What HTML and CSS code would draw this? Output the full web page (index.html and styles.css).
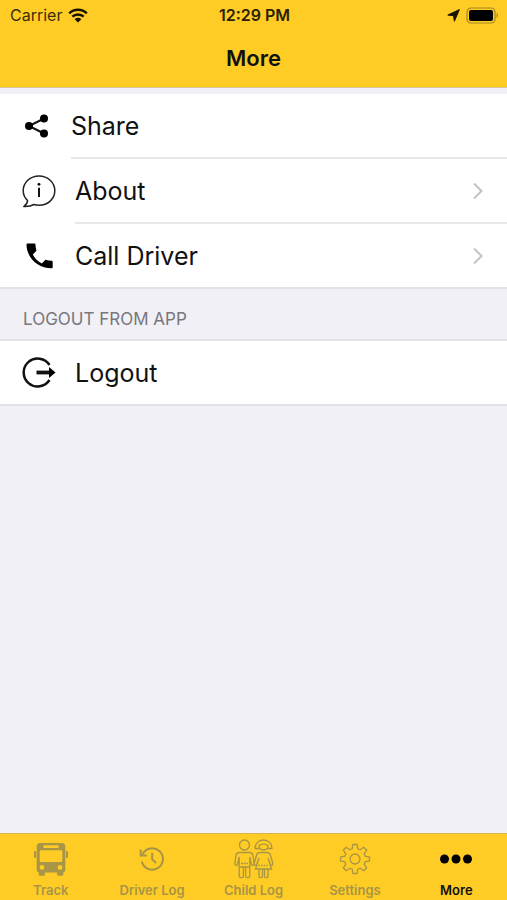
FILE: index.html
```html
<!DOCTYPE html>
<html lang="en">
<head>
  <meta charset="UTF-8">
  <meta name="viewport" content="width=device-width, initial-scale=1">
  <title>More</title>
  <link rel="stylesheet" href="styles.css">
</head>
<body>

  <header class="top-bar">
    <div class="status-bar">
      <div class="status-left">
        <span>Carrier</span>
        <svg width="20" height="15" viewBox="0 0 20 15">
          <path d="M1.2 5.4a12.6 12.6 0 0 1 17.6 0M4.3 8.7a8.2 8.2 0 0 1 11.4 0" fill="none" stroke="#1a1400" stroke-width="2.5"/>
          <path d="M6.6 11.2a4.9 4.9 0 0 1 6.8 0L10 14.6z" fill="#1a1400"/>
        </svg>
      </div>
      <span class="status-time">12:29 PM</span>
      <div class="status-right">
        <svg width="13" height="13" viewBox="0 0 13 13">
          <path d="M12.4.6 7.4 12.2 6.5 6.7.8 6z" fill="#1a1400" stroke="#1a1400" stroke-linejoin="round"/>
        </svg>
        <svg width="33" height="17" viewBox="0 0 33 17">
          <rect x="1" y="1" width="28" height="15" rx="4" fill="none" stroke="#a08325" stroke-width="1.2"/>
          <rect x="3" y="3" width="24" height="11" rx="2" fill="#000"/>
          <path d="M30.6 6v5c1.8-.8 1.8-4.2 0-5z" fill="#a08325"/>
        </svg>
      </div>
    </div>
    <h1>More</h1>
  </header>

  <main>
    <ul class="menu">
      <li>
        <a href="#share" class="menu-item menu-item-narrow">
          <span class="menu-icon">
            <svg width="26" height="26" viewBox="0 0 26 26">
              <path d="M20 5.5 5 13l15 7.5" fill="none" stroke="#111" stroke-width="2"/>
              <circle cx="5" cy="13" r="4"/>
              <circle cx="20" cy="5.5" r="4"/>
              <circle cx="20" cy="20.5" r="4"/>
            </svg>
          </span>
          <span class="menu-label">Share</span>
        </a>
      </li>
      <li>
        <a href="#about" class="menu-item">
          <span class="menu-icon">
            <svg width="34" height="34" viewBox="0 0 34 34">
              <path d="M5.6 26.5C2.8 24 1.2 20.6 1.2 16.8 1.2 8.6 8.2 2 17 2s15.800 6.600 15.800 14.800S25.800 31.300 17 31.300c-2 0-3.600-.3-5.200-.8-2.600 1.700-6 2.200-10 2 2.200-1.500 3.600-3.600 3.800-6z" fill="none" stroke="#222" stroke-width="1.5" stroke-linejoin="round"/>
              <path d="M17 13.700V23" stroke="#111" stroke-width="2"/>
              <circle cx="17" cy="10.300" r="1.400"/>
            </svg>
          </span>
          <span class="menu-label">About</span>
          <svg class="chevron" width="12" height="18" viewBox="0 0 12 18">
            <path d="m2 1.500 7.500 7.500L2 16.500"/>
          </svg>
        </a>
      </li>
      <li>
        <a href="#call" class="menu-item">
          <span class="menu-icon">
            <svg width="34" height="34" viewBox="0 0 34 34">
              <path d="M5.700 4.500h6.500c.8 0 1.300.5 1.300 1.300 0 1.800.3 3.500.8 5 .2.500 0 1-.3 1.400l-3.200 3.200c2 4 5 7 9 9l3.200-3.200c.4-.4.900-.5 1.400-.3 1.500.5 3.200.8 5 .8.800 0 1.300.5 1.300 1.300v5c0 .8-.5 1.300-1.300 1.300C15.600 29.300 4.500 18.200 4.500 5.800c0-.8.500-1.300 1.200-1.300z"/>
            </svg>
          </span>
          <span class="menu-label">Call Driver</span>
          <svg class="chevron" width="12" height="18" viewBox="0 0 12 18">
            <path d="m2 1.500 7.500 7.500L2 16.500"/>
          </svg>
        </a>
      </li>
    </ul>

    <h2>LOGOUT FROM APP</h2>

    <ul class="menu">
      <li>
        <button type="button" class="menu-item">
          <span class="menu-icon">
            <svg width="34" height="34" viewBox="0 0 34 34">
              <path d="M27.500 9a14 14 0 1 0 0 15" fill="none" stroke="#111" stroke-width="2.500"/>
              <path d="M14.500 16.500h13" stroke="#111" stroke-width="3.800"/>
              <path d="m27 11 6.500 5.500L27 22z"/>
            </svg>
          </span>
          <span class="menu-label">Logout</span>
        </button>
      </li>
    </ul>
  </main>

  <nav class="tab-bar">
    <a href="#track">
      <svg width="36" height="36" viewBox="0 0 36 36">
        <path fill="#a89545" fill-rule="evenodd" d="M7 2h22c2 0 3.300 1.300 3.300 3.300V29c0 1.300-.8 2.200-2 2.400v1.800c0 .9-.7 1.600-1.600 1.600h-3c-.9 0-1.600-.7-1.600-1.600v-1.700H11.900v1.700c0 .9-.7 1.600-1.600 1.600h-3c-.9 0-1.600-.7-1.600-1.600v-1.800c-1.200-.2-2-1.100-2-2.400V5.300C3.700 3.300 5 2 7 2zM11 4.300c-1 0-1 2.600 0 2.600h14c1 0 1-2.600 0-2.600zM8 9.300c-.8 0-1.300.5-1.300 1.300v9c0 .8.500 1.300 1.300 1.300h20c.8 0 1.300-.5 1.300-1.300v-9c0-.8-.5-1.300-1.300-1.300zM9 24a2.400 2.400 0 1 0 0 4.800A2.400 2.400 0 0 0 9 24zm18 0a2.400 2.400 0 1 0 0 4.800 2.400 2.400 0 0 0 0-4.800z"/>
        <path fill="#a89545" d="M3 10H2.200c-.7 0-1.200.5-1.200 1.200v4.600c0 .7.500 1.200 1.200 1.200H3zM33 10h.8c.7 0 1.200.5 1.200 1.200v4.600c0 .7-.5 1.200-1.200 1.200H33z"/>
      </svg>
      <span>Track</span>
    </a>
    <a href="#driver-log">
      <svg width="26" height="26" viewBox="0 0 26 26" class="line-icon line-bold">
        <path d="M3.500 8.500A10.700 10.700 0 1 1 2.800 15.500M13.200 6.800v6.500l4 3.600"/>
        <path d="M1.700 3.500v6h6"/>
      </svg>
      <span>Driver Log</span>
    </a>
    <a href="#child-log">
      <svg width="40" height="40" viewBox="0 0 40 40" class="line-icon">
        <!-- boy -->
        <circle cx="10.500" cy="6" r="5"/>
        <path d="M5.500 13.500h10c2.200 0 3.300 1.200 3.600 3.500l1 8c0 1.700-2.200 2-2.600.3L15.800 18v10H5.200V18l-1.700 7.300C3.100 27 .9 26.700.9 25l1-8c.3-2.300 1.400-3.500 3.600-3.500zM5.200 28v9.500c0 1.500 4.200 1.500 4.200 0V28M11.600 28v9.500c0 1.500 4.200 1.500 4.200 0V28"/>
        <path d="M7 24.500h7" stroke-dasharray="2 .6"/>
        <!-- girl -->
        <path d="M25 6.500c0 6 9 6 9 0M21 9.500c0-5 3.500-8.500 8.500-8.500S38 4.500 38 9.500h-4.500M21 9.500h4.500M25 6.500c1.800-1.800 7.200-1.800 9 0"/>
        <path d="M26 13.500h7c2 0 3.200 1 3.600 3l2.200 8c.4 1.700-1.800 2.300-2.500.7L34 19l3.500 11h-16L25 19l-2.300 6.200c-.7 1.600-2.900 1-2.500-.7l2.200-8c.4-2 1.600-3 3.600-3zM25 30v7.500c0 1.500 3.500 1.500 3.500 0V30M30.500 30v7.500c0 1.500 3.500 1.500 3.500 0V30"/>
        <path d="M24.500 26.500h10" stroke-dasharray="1.400 1.200"/>
      </svg>
      <span>Child Log</span>
    </a>
    <a href="#settings">
      <svg width="32" height="32" viewBox="-16 -16 32 32" class="line-icon">
        <path d="M-2.900-10.100-2-14.500H2l.9 4.400Q4-9.800 5.100-9.200L8.800-11.700l2.900 2.900L9.200-5.100Q9.800-4 10.100-2.900L14.500-2V2l-4.400.9Q9.800 4 9.200 5.100L11.700 8.800 8.800 11.700 5.100 9.200Q4 9.800 2.900 10.100L2 14.500H-2L-2.900 10.100Q-4 9.800-5.100 9.200L-8.800 11.700-11.700 8.800-9.200 5.100Q-9.800 4-10.100 2.900L-14.500 2V-2L-10.100-2.900Q-9.800-4-9.200-5.100L-11.700-8.800-8.800-11.700-5.100-9.200Q-4-9.800-2.900-10.100z"/>
        <circle r="5"/>
      </svg>
      <span>Settings</span>
    </a>
    <a href="#more" class="active" aria-current="page">
      <svg width="34" height="12" viewBox="0 0 34 12">
        <circle cx="5.500" cy="6" r="4.500"/>
        <circle cx="17" cy="6" r="4.500"/>
        <circle cx="28.500" cy="6" r="4.500"/>
      </svg>
      <span>More</span>
    </a>
  </nav>

</body>
</html>
```
FILE: styles.css
```css
* {
  box-sizing: border-box;
}

body {
  font-family: Inter, "Liberation Sans", sans-serif;
  background-color: #f1f0f6;
  color: #111;
  margin: 0;
  min-height: 100vh;
  display: flex;
  flex-direction: column;
}

svg {
  display: block;
  flex-shrink: 0;
}

.top-bar {
  background-color: #ffcc25;
  border-bottom: 1px solid #d5c693;
}

.status-bar {
  display: grid;
  grid-template-columns: 1fr auto 1fr;
  align-items: center;
  height: 28px;
  padding: 2px 8px 0 10px;
  font-size: 16px;
  color: #3a2e08;
}

.status-left, .status-right {
  display: flex;
  align-items: center;
  gap: 6px;
}

.status-right {
  justify-content: flex-end;
}

.status-time {
  font-weight: 600;
  color: #2a2105;
}

h1 {
  margin: 0;
  padding: 15px 0 14px;
  font-size: 22px;
  line-height: 30px;
  font-weight: 600;
  text-align: center;
}

main {
  flex: 1;
  padding-top: 6px;
}

.menu {
  list-style: none;
  margin: 0;
  padding: 0;
  background-color: white;
  box-shadow: inset 0 -2px 0 #e2e2e5;
}

.menu-item {
  display: flex;
  align-items: center;
  position: relative;
  width: 100%;
  height: 65px;
  padding: 0 23px 1px 22px;
  border: none;
  background: none;
  font: inherit;
  font-size: 25px;
  text-align: left;
  color: #111;
  text-decoration: none;
}

.menu-icon {
  display: flex;
  justify-content: center;
  width: 34px;
  margin-right: 19px;
}

.menu-item-narrow .menu-icon {
  width: 30px;
}

.menu-label {
  flex: 1;
}

/* separator starts under the label */
.menu li + li .menu-item::before {
  content: "";
  position: absolute;
  top: -2px;
  left: 75px;
  right: 0;
  height: 2px;
  background-color: #e8e8ea;
}

.menu li:nth-child(2) .menu-item::before {
  left: 71px;
}

.chevron path {
  fill: none;
  stroke: #c2c2c4;
  stroke-width: 2;
}

h2 {
  margin: 0;
  padding: 20px 23px 10px;
  border-bottom: 2px solid #e2e2e5;
  font-size: 17px;
  line-height: 20px;
  font-weight: 400;
  color: #77777c;
}

.tab-bar {
  display: flex;
  height: 67px;
  background-color: #ffcc25;
  border-top: 1px solid #d5b44a;
}

.tab-bar a {
  flex: 1;
  display: grid;
  grid-template-rows: 46px 16px;
  justify-items: center;
  align-items: center;
  align-content: start;
  padding-top: 2px;
  font-size: 13px;
  line-height: 16px;
  font-weight: 600;
  color: #a89545;
  text-decoration: none;
}

.tab-bar .active {
  color: #111;
}

.line-icon {
  fill: none;
  stroke: #a89545;
  stroke-width: 1.3;
}

.line-bold {
  stroke-width: 2;
}
```
